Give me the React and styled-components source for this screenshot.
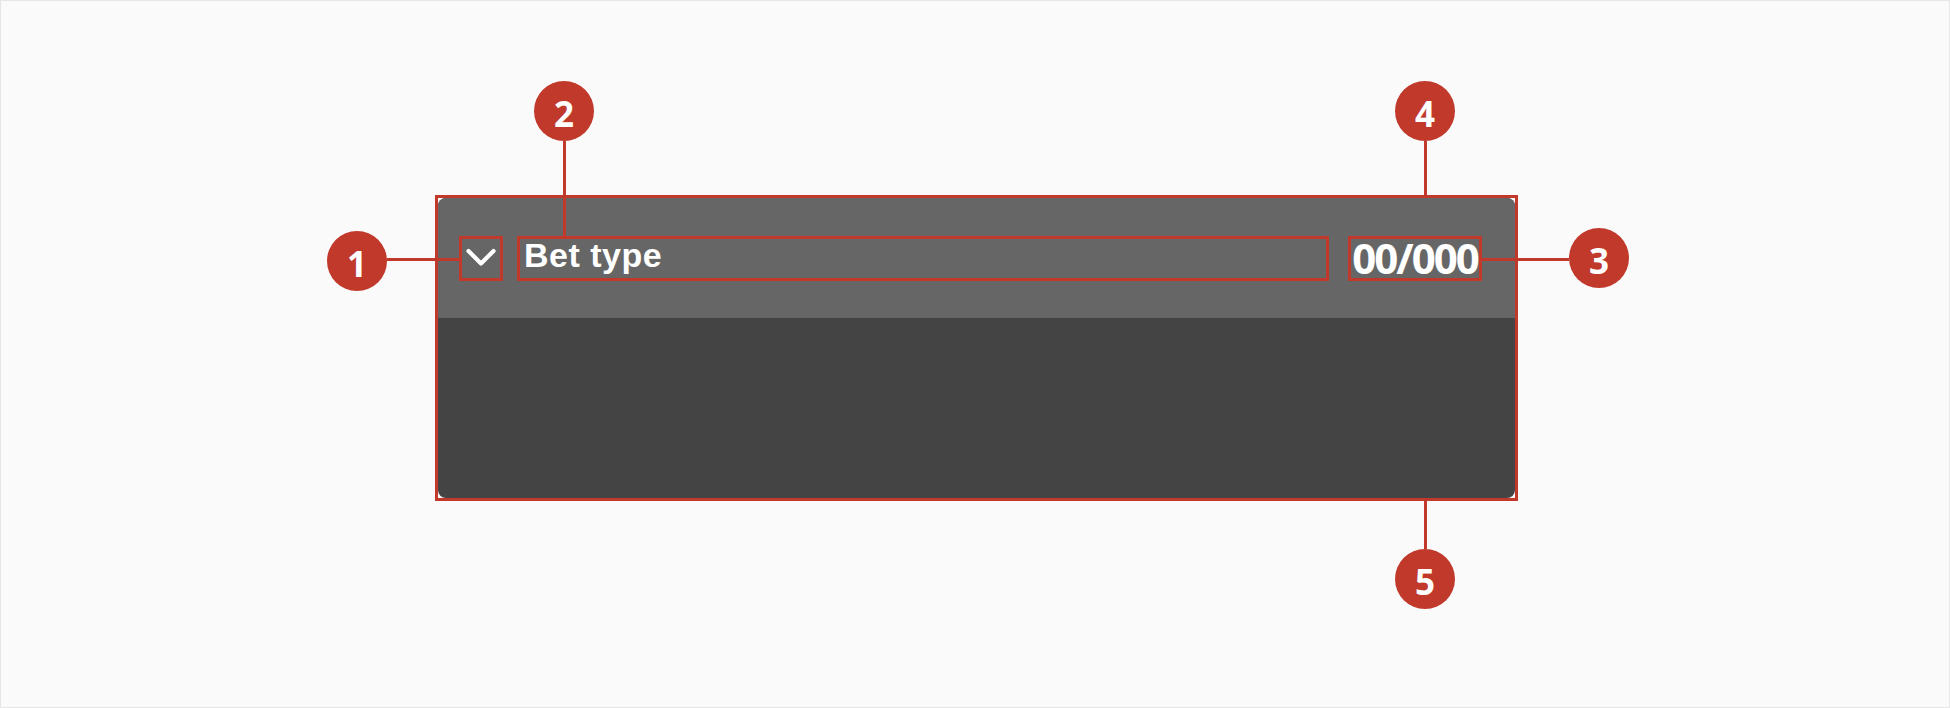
import React from 'react';
import { styled, createGlobalStyle } from 'styled-components';

const RED = '#c0392b';

const GlobalStyle = createGlobalStyle`
  html, body {
    margin: 0;
    padding: 0;
    background: #fafafa;
  }
  body {
    font-family: 'Open Sans', 'Liberation Sans', sans-serif;
  }
`;

const markers = [
  { label: '1', x: 357, y: 261 },
  { label: '2', x: 564, y: 111 },
  { label: '3', x: 1599, y: 258 },
  { label: '4', x: 1425, y: 111 },
  { label: '5', x: 1425, y: 579 },
];

// leader lines between the markers and the highlighted parts
const leaders = [
  { x: 387, y: 258, w: 72, h: 3 },
  { x: 563, y: 141, w: 3, h: 96 },
  { x: 1482, y: 258, w: 87, h: 3 },
  { x: 1424, y: 141, w: 3, h: 54 },
  { x: 1424, y: 501, w: 3, h: 48 },
];

const App = () => {
  return (
    <>
      <GlobalStyle />
      <Page>
        <Outline>
          <Card>
            <Header>
              <Toggle type='button' aria-label='Collapse'>
                <svg width='30' height='20' viewBox='0 0 30 20' fill='none'>
                  <polyline
                    points='2.5,3 15,15.5 27.5,3'
                    stroke='#fff'
                    strokeWidth='4.2'
                    strokeLinecap='round'
                    strokeLinejoin='round'
                  />
                </svg>
              </Toggle>
              <Title>Bet type</Title>
              <Count>00/000</Count>
            </Header>
            <Body />
          </Card>
        </Outline>
        {leaders.map((l, i) => (
          <Leader key={i} $x={l.x} $y={l.y} $w={l.w} $h={l.h} />
        ))}
        {markers.map((m) => (
          <Marker key={m.label} $x={m.x} $y={m.y}>
            {m.label}
          </Marker>
        ))}
      </Page>
    </>
  );
};

export default App;

const Page = styled.div`
  position: relative;
  width: 1950px;
  height: 708px;
  box-sizing: border-box;
  padding: 195px 0 0 435px;
  background: #fafafa;
  box-shadow: inset 0 0 0 1px #e6e6e6;
`;

const Outline = styled.div`
  width: 1083px;
  height: 306px;
  box-sizing: border-box;
  border: 3px solid ${RED};
`;

const Card = styled.div`
  height: 100%;
  display: flex;
  flex-direction: column;
  border-radius: 8px;
  overflow: hidden;
  background: #444444;
`;

const Header = styled.div`
  height: 120px;
  flex-shrink: 0;
  display: flex;
  align-items: center;
  gap: 14px;
  padding: 0 33px 0 21px;
  background: #666666;
`;

const Body = styled.div`
  flex: 1;
`;

const Toggle = styled.button`
  width: 44px;
  height: 45px;
  box-sizing: border-box;
  padding: 0;
  display: flex;
  align-items: center;
  justify-content: center;
  border: 3px solid ${RED};
  background: none;
  cursor: pointer;
`;

const Title = styled.div`
  flex: 1;
  height: 45px;
  box-sizing: border-box;
  display: flex;
  align-items: center;
  padding: 0 0 5px 4px;
  border: 3px solid ${RED};
  color: #ffffff;
  font-family: 'Liberation Sans', Arial, sans-serif;
  font-weight: 700;
  font-size: 34px;
  letter-spacing: 0.5px;
  white-space: nowrap;
`;

const Count = styled.div`
  width: 134px;
  height: 45px;
  margin-left: 5px;
  box-sizing: border-box;
  display: flex;
  align-items: center;
  justify-content: center;
  border: 3px solid ${RED};
  color: #ffffff;
  font-family: 'Open Sans', sans-serif;
  font-weight: 700;
  font-size: 42px;
  letter-spacing: -2px;
  line-height: 1;
`;

const Leader = styled.div`
  position: absolute;
  left: ${(p) => p.$x}px;
  top: ${(p) => p.$y}px;
  width: ${(p) => p.$w}px;
  height: ${(p) => p.$h}px;
  background: ${RED};
`;

const Marker = styled.div`
  position: absolute;
  left: ${(p) => p.$x - 30}px;
  top: ${(p) => p.$y - 30}px;
  width: 60px;
  height: 60px;
  box-sizing: border-box;
  padding-top: 4px;
  border-radius: 50%;
  display: flex;
  align-items: center;
  justify-content: center;
  background: ${RED};
  color: #ffffff;
  font-family: 'Open Sans', sans-serif;
  font-weight: 700;
  font-size: 35px;
  line-height: 1;
`;
